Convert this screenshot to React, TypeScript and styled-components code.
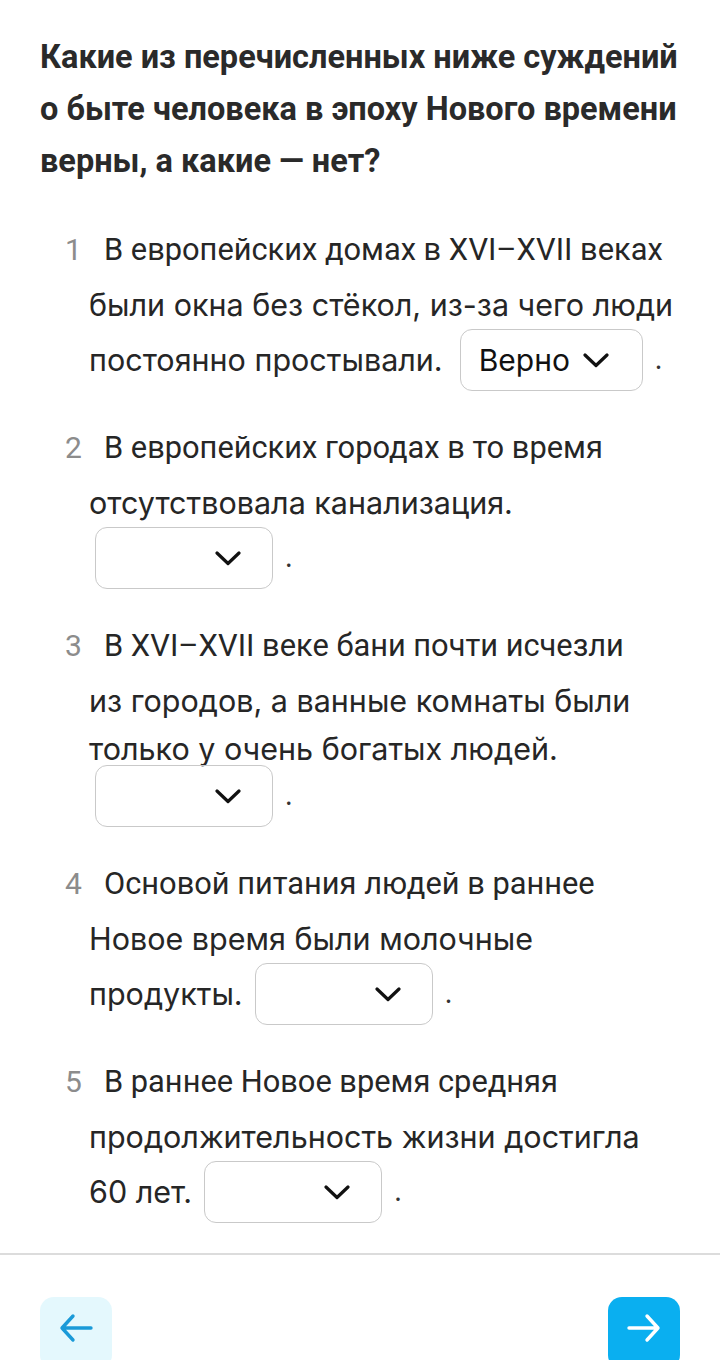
import React from "react";
import styled, { createGlobalStyle } from "styled-components";

const Global = createGlobalStyle`
  html, body { margin: 0; padding: 0; background: #ffffff; }
  body { font-family: "Inter", "Noto Sans", sans-serif; color: #262626; overflow: hidden; }
`;

const Page = styled.div`
  width: 720px;
  display: flex;
  flex-direction: column;
  & > * { flex: none; }
`;

const Content = styled.div`
  padding: 31px 40px 0 40px;
  display: flex;
  flex-direction: column;
`;

const Title = styled.h1`
  margin: 0;
  font-family: "Roboto", "Liberation Sans", sans-serif;
  font-weight: 700;
  font-size: 32.5px;
  line-height: 52px;
  color: #2a2a2a;
  white-space: nowrap;
`;

const List = styled.div`
  margin-top: 35px;
  display: flex;
  flex-direction: column;
  gap: 33px;
`;

const Item = styled.div`
  padding-left: 49px;
  display: flex;
  flex-direction: column;
`;

const Line = styled.div<{ $tight?: boolean; $first?: boolean }>`
  height: ${(p) => (p.$tight ? 40 : 55)}px;
  display: flex;
  align-items: center;
  white-space: nowrap;
  margin-left: ${(p) => (p.$first ? -24 : 0)}px;
  font-family: ${(p) =>
    p.$first ? `"Roboto", "Liberation Sans", sans-serif` : `"Inter", "Noto Sans", sans-serif`};
  font-size: ${(p) => (p.$first ? 30.8 : 30.5)}px;
  color: #262626;
`;

const Num = styled.span`
  font-family: "Roboto", "Liberation Sans", sans-serif;
  font-size: 30px;
  color: #8c8c8c;
  width: 39px;
  flex: none;
`;

const Select = styled.div<{ $filled?: boolean; $alone?: boolean }>`
  box-sizing: border-box;
  width: ${(p) => (p.$filled ? 183 : 178)}px;
  height: 62px;
  border: 1.5px solid #c9c9c9;
  border-radius: 12px;
  display: flex;
  align-items: center;
  justify-content: ${(p) => (p.$filled ? "flex-start" : "flex-end")};
  gap: 13px;
  padding: 0 31px 0 18px;
  margin-left: ${(p) => (p.$alone ? 6 : p.$filled ? 17 : 12)}px;
  font-family: "Inter", "Noto Sans", sans-serif;
  font-size: 30px;
  color: #111;
  flex: none;
`;

const Dot = styled.span`
  margin-left: 12px;
  font-size: 26px;
  color: #333;
`;

const Divider = styled.div`
  margin-top: 34px;
  height: 2px;
  background: #dcdcdc;
`;

const Footer = styled.div`
  display: flex;
  justify-content: space-between;
  padding: 42px 40px 0 40px;
`;

const NavButton = styled.div<{ $primary?: boolean }>`
  width: 72px;
  height: 72px;
  border-radius: 14px;
  background: ${(p) => (p.$primary ? "#0aaff0" : "#e4f8fd")};
  color: ${(p) => (p.$primary ? "#ffffff" : "#1a9ad8")};
  display: flex;
  align-items: center;
  justify-content: center;
  padding-bottom: 10px;
  box-sizing: border-box;
`;

const Chevron = () => (
  <svg width="26" height="16" viewBox="0 0 26 16" fill="none">
    <path d="M2 3 L13 13.5 L24 3" stroke="#111" strokeWidth="3.2" strokeLinecap="round" strokeLinejoin="round" />
  </svg>
);

const Arrow = ({ dir }: { dir: "left" | "right" }) => (
  <svg width="36" height="30" viewBox="0 0 36 30" fill="none" style={{ transform: dir === "left" ? "scaleX(-1)" : undefined }}>
    <path d="M3 15 H32 M21 3 L32 15 L21 27" stroke="currentColor" strokeWidth="3.4" strokeLinecap="round" strokeLinejoin="round" />
  </svg>
);

const Drop = ({ value, alone }: { value?: string; alone?: boolean }) => (
  <>
    <Select $filled={!!value} $alone={alone}>
      {value && <span>{value}</span>}
      <Chevron />
    </Select>
    <Dot>.</Dot>
  </>
);

export default function App() {
  return (
    <Page>
      <Global />
      <Content>
        <Title>
          Какие из перечисленных ниже суждений
          <br />о быте человека в эпоху Нового времени
          <br />
          верны, а какие — нет?
        </Title>
        <List>
          <Item>
            <Line $first>
              <Num>1</Num>В европейских домах в XVI–XVII веках
            </Line>
            <Line>были окна без стёкол, из-за чего люди</Line>
            <Line>
              постоянно простывали.
              <Drop value="Верно" />
            </Line>
          </Item>
          <Item>
            <Line $first>
              <Num>2</Num>В европейских городах в то время
            </Line>
            <Line>отсутствовала канализация.</Line>
            <Line>
              <Drop alone />
            </Line>
          </Item>
          <Item>
            <Line $first>
              <Num>3</Num>В XVI–XVII веке бани почти исчезли
            </Line>
            <Line>из городов, а ванные комнаты были</Line>
            <Line $tight>только у очень богатых людей.</Line>
            <Line>
              <Drop alone />
            </Line>
          </Item>
          <Item>
            <Line $first>
              <Num>4</Num>Основой питания людей в раннее
            </Line>
            <Line>Новое время были молочные</Line>
            <Line>
              продукты.
              <Drop />
            </Line>
          </Item>
          <Item>
            <Line $first>
              <Num>5</Num>В раннее Новое время средняя
            </Line>
            <Line>продолжительность жизни достигла</Line>
            <Line>
              60 лет.
              <Drop />
            </Line>
          </Item>
        </List>
      </Content>
      <Divider />
      <Footer>
        <NavButton>
          <Arrow dir="left" />
        </NavButton>
        <NavButton $primary>
          <Arrow dir="right" />
        </NavButton>
      </Footer>
    </Page>
  );
}
